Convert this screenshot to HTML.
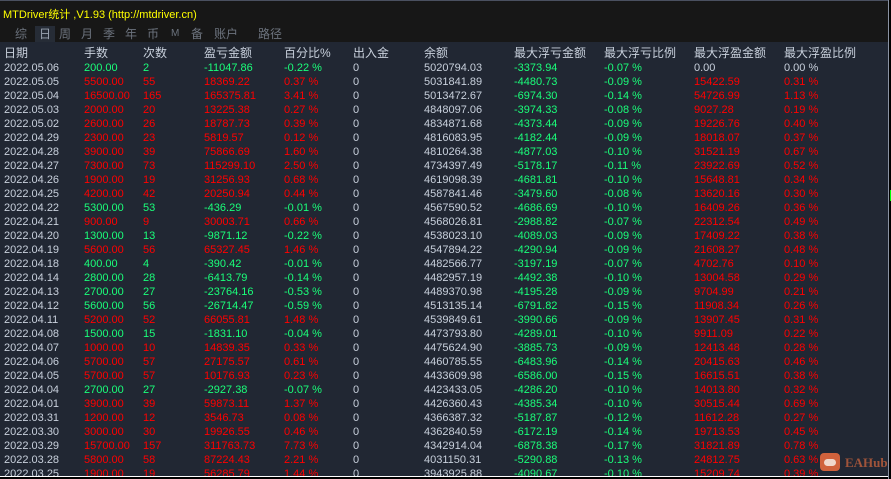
<!DOCTYPE html>
<html><head><meta charset="utf-8"><style>
*{margin:0;padding:0;box-sizing:border-box}
body{width:891px;height:479px;overflow:hidden;background:#000;font-family:"Liberation Sans","Noto Sans CJK SC",sans-serif;position:relative}
#top{position:absolute;left:0;top:0;width:888px;height:42px;background:#171717;border-top:1px solid #4a5060}
#title{position:absolute;left:3px;top:5px;color:#ffff00;font-size:11px}
#tabs{position:absolute;left:0;top:25px;height:17px;width:100%}
#tabs span{position:absolute;top:0;color:#6c737e;font-size:12px;line-height:16px}
#tabs .on{background:#262c36;color:#9aa3b0;padding:0 4px}
#tbl{position:absolute;left:0;top:42px;width:888px;height:434px;background:#212733;overflow:hidden}
#edge{position:absolute;left:888px;top:0;width:1px;height:479px;background:#8a93a3}
#gm{position:absolute;left:890px;top:190px;width:1px;height:11px;background:#00ff00}
.r{position:absolute;left:0;height:14px;width:888px;font-size:11px;line-height:14px;color:#c8d0dc}
.r span{position:absolute;top:0;white-space:nowrap}
.h{font-size:12px}
.a{left:4px}.b{left:84px}.c{left:143px}.d{left:204px}.e{left:284px}.f{left:353px}.g{left:424px}.i{left:514px;color:#1aff7a}.j{left:604px;color:#1aff7a}.k{left:694px;color:#ff0000}.l{left:784px;color:#ff0000}
.h .i,.h .j,.h .k,.h .l{color:#c8d0dc}
.G .b,.G .c,.G .d,.G .e{color:#1aff7a}
.R .b,.R .c,.R .d,.R .e{color:#ff0000}
.Z .k,.Z .l{color:#c8d0dc}
#bot{position:absolute;left:0;top:476px;width:888px;height:3px;background:#000;border-top:1px solid #fff}
#wm{position:absolute;left:820px;top:453px;width:20px;height:18px;background:#d0623c;border-radius:4px}
#wm::after{content:"";position:absolute;left:4px;top:6px;width:12px;height:7px;background:#f0d8cc;border-radius:5px}
#wt{position:absolute;left:845px;top:455px;color:#a0543a;font-family:"Liberation Serif",serif;font-size:13px;font-weight:bold}
</style></head><body>
<div id="top">
<div id="title">MTDriver统计 ,V1.93 (http://mtdriver.cn)</div>
<div id="tabs">
<span style="left:15px">综</span><span class="on" style="left:35px">日</span><span style="left:59px">周</span><span style="left:81px">月</span><span style="left:103px">季</span><span style="left:125px">年</span><span style="left:147px">币</span><span style="left:171px;font-size:10px">M</span><span style="left:191px">备</span><span style="left:214px">账户</span><span style="left:258px">路径</span>
</div></div>
<div id="tbl">
<div class="r h" style="top:4px"><span class="a">日期</span><span class="b">手数</span><span class="c">次数</span><span class="d">盈亏金额</span><span class="e">百分比%</span><span class="f">出入金</span><span class="g">余额</span><span class="i">最大浮亏金额</span><span class="j">最大浮亏比例</span><span class="k">最大浮盈金额</span><span class="l">最大浮盈比例</span></div>
<div class="r G Z" style="top:19px"><span class="a">2022.05.06</span><span class="b">200.00</span><span class="c">2</span><span class="d">-11047.86</span><span class="e">-0.22 %</span><span class="f">0</span><span class="g">5020794.03</span><span class="i">-3373.94</span><span class="j">-0.07 %</span><span class="k">0.00</span><span class="l">0.00 %</span></div>
<div class="r R" style="top:33px"><span class="a">2022.05.05</span><span class="b">5500.00</span><span class="c">55</span><span class="d">18369.22</span><span class="e">0.37 %</span><span class="f">0</span><span class="g">5031841.89</span><span class="i">-4480.73</span><span class="j">-0.09 %</span><span class="k">15422.59</span><span class="l">0.31 %</span></div>
<div class="r R" style="top:47px"><span class="a">2022.05.04</span><span class="b">16500.00</span><span class="c">165</span><span class="d">165375.81</span><span class="e">3.41 %</span><span class="f">0</span><span class="g">5013472.67</span><span class="i">-6974.30</span><span class="j">-0.14 %</span><span class="k">54726.99</span><span class="l">1.13 %</span></div>
<div class="r R" style="top:61px"><span class="a">2022.05.03</span><span class="b">2000.00</span><span class="c">20</span><span class="d">13225.38</span><span class="e">0.27 %</span><span class="f">0</span><span class="g">4848097.06</span><span class="i">-3974.33</span><span class="j">-0.08 %</span><span class="k">9027.28</span><span class="l">0.19 %</span></div>
<div class="r R" style="top:75px"><span class="a">2022.05.02</span><span class="b">2600.00</span><span class="c">26</span><span class="d">18787.73</span><span class="e">0.39 %</span><span class="f">0</span><span class="g">4834871.68</span><span class="i">-4373.44</span><span class="j">-0.09 %</span><span class="k">19226.76</span><span class="l">0.40 %</span></div>
<div class="r R" style="top:89px"><span class="a">2022.04.29</span><span class="b">2300.00</span><span class="c">23</span><span class="d">5819.57</span><span class="e">0.12 %</span><span class="f">0</span><span class="g">4816083.95</span><span class="i">-4182.44</span><span class="j">-0.09 %</span><span class="k">18018.07</span><span class="l">0.37 %</span></div>
<div class="r R" style="top:103px"><span class="a">2022.04.28</span><span class="b">3900.00</span><span class="c">39</span><span class="d">75866.69</span><span class="e">1.60 %</span><span class="f">0</span><span class="g">4810264.38</span><span class="i">-4877.03</span><span class="j">-0.10 %</span><span class="k">31521.19</span><span class="l">0.67 %</span></div>
<div class="r R" style="top:117px"><span class="a">2022.04.27</span><span class="b">7300.00</span><span class="c">73</span><span class="d">115299.10</span><span class="e">2.50 %</span><span class="f">0</span><span class="g">4734397.49</span><span class="i">-5178.17</span><span class="j">-0.11 %</span><span class="k">23922.69</span><span class="l">0.52 %</span></div>
<div class="r R" style="top:131px"><span class="a">2022.04.26</span><span class="b">1900.00</span><span class="c">19</span><span class="d">31256.93</span><span class="e">0.68 %</span><span class="f">0</span><span class="g">4619098.39</span><span class="i">-4681.81</span><span class="j">-0.10 %</span><span class="k">15648.81</span><span class="l">0.34 %</span></div>
<div class="r R" style="top:145px"><span class="a">2022.04.25</span><span class="b">4200.00</span><span class="c">42</span><span class="d">20250.94</span><span class="e">0.44 %</span><span class="f">0</span><span class="g">4587841.46</span><span class="i">-3479.60</span><span class="j">-0.08 %</span><span class="k">13620.16</span><span class="l">0.30 %</span></div>
<div class="r G" style="top:159px"><span class="a">2022.04.22</span><span class="b">5300.00</span><span class="c">53</span><span class="d">-436.29</span><span class="e">-0.01 %</span><span class="f">0</span><span class="g">4567590.52</span><span class="i">-4686.69</span><span class="j">-0.10 %</span><span class="k">16409.26</span><span class="l">0.36 %</span></div>
<div class="r R" style="top:173px"><span class="a">2022.04.21</span><span class="b">900.00</span><span class="c">9</span><span class="d">30003.71</span><span class="e">0.66 %</span><span class="f">0</span><span class="g">4568026.81</span><span class="i">-2988.82</span><span class="j">-0.07 %</span><span class="k">22312.54</span><span class="l">0.49 %</span></div>
<div class="r G" style="top:187px"><span class="a">2022.04.20</span><span class="b">1300.00</span><span class="c">13</span><span class="d">-9871.12</span><span class="e">-0.22 %</span><span class="f">0</span><span class="g">4538023.10</span><span class="i">-4089.03</span><span class="j">-0.09 %</span><span class="k">17409.22</span><span class="l">0.38 %</span></div>
<div class="r R" style="top:201px"><span class="a">2022.04.19</span><span class="b">5600.00</span><span class="c">56</span><span class="d">65327.45</span><span class="e">1.46 %</span><span class="f">0</span><span class="g">4547894.22</span><span class="i">-4290.94</span><span class="j">-0.09 %</span><span class="k">21608.27</span><span class="l">0.48 %</span></div>
<div class="r G" style="top:215px"><span class="a">2022.04.18</span><span class="b">400.00</span><span class="c">4</span><span class="d">-390.42</span><span class="e">-0.01 %</span><span class="f">0</span><span class="g">4482566.77</span><span class="i">-3197.19</span><span class="j">-0.07 %</span><span class="k">4702.76</span><span class="l">0.10 %</span></div>
<div class="r G" style="top:229px"><span class="a">2022.04.14</span><span class="b">2800.00</span><span class="c">28</span><span class="d">-6413.79</span><span class="e">-0.14 %</span><span class="f">0</span><span class="g">4482957.19</span><span class="i">-4492.38</span><span class="j">-0.10 %</span><span class="k">13004.58</span><span class="l">0.29 %</span></div>
<div class="r G" style="top:243px"><span class="a">2022.04.13</span><span class="b">2700.00</span><span class="c">27</span><span class="d">-23764.16</span><span class="e">-0.53 %</span><span class="f">0</span><span class="g">4489370.98</span><span class="i">-4195.28</span><span class="j">-0.09 %</span><span class="k">9704.99</span><span class="l">0.21 %</span></div>
<div class="r G" style="top:257px"><span class="a">2022.04.12</span><span class="b">5600.00</span><span class="c">56</span><span class="d">-26714.47</span><span class="e">-0.59 %</span><span class="f">0</span><span class="g">4513135.14</span><span class="i">-6791.82</span><span class="j">-0.15 %</span><span class="k">11908.34</span><span class="l">0.26 %</span></div>
<div class="r R" style="top:271px"><span class="a">2022.04.11</span><span class="b">5200.00</span><span class="c">52</span><span class="d">66055.81</span><span class="e">1.48 %</span><span class="f">0</span><span class="g">4539849.61</span><span class="i">-3990.66</span><span class="j">-0.09 %</span><span class="k">13907.45</span><span class="l">0.31 %</span></div>
<div class="r G" style="top:285px"><span class="a">2022.04.08</span><span class="b">1500.00</span><span class="c">15</span><span class="d">-1831.10</span><span class="e">-0.04 %</span><span class="f">0</span><span class="g">4473793.80</span><span class="i">-4289.01</span><span class="j">-0.10 %</span><span class="k">9911.09</span><span class="l">0.22 %</span></div>
<div class="r R" style="top:299px"><span class="a">2022.04.07</span><span class="b">1000.00</span><span class="c">10</span><span class="d">14839.35</span><span class="e">0.33 %</span><span class="f">0</span><span class="g">4475624.90</span><span class="i">-3885.73</span><span class="j">-0.09 %</span><span class="k">12413.48</span><span class="l">0.28 %</span></div>
<div class="r R" style="top:313px"><span class="a">2022.04.06</span><span class="b">5700.00</span><span class="c">57</span><span class="d">27175.57</span><span class="e">0.61 %</span><span class="f">0</span><span class="g">4460785.55</span><span class="i">-6483.96</span><span class="j">-0.14 %</span><span class="k">20415.63</span><span class="l">0.46 %</span></div>
<div class="r R" style="top:327px"><span class="a">2022.04.05</span><span class="b">5700.00</span><span class="c">57</span><span class="d">10176.93</span><span class="e">0.23 %</span><span class="f">0</span><span class="g">4433609.98</span><span class="i">-6586.00</span><span class="j">-0.15 %</span><span class="k">16615.51</span><span class="l">0.38 %</span></div>
<div class="r G" style="top:341px"><span class="a">2022.04.04</span><span class="b">2700.00</span><span class="c">27</span><span class="d">-2927.38</span><span class="e">-0.07 %</span><span class="f">0</span><span class="g">4423433.05</span><span class="i">-4286.20</span><span class="j">-0.10 %</span><span class="k">14013.80</span><span class="l">0.32 %</span></div>
<div class="r R" style="top:355px"><span class="a">2022.04.01</span><span class="b">3900.00</span><span class="c">39</span><span class="d">59873.11</span><span class="e">1.37 %</span><span class="f">0</span><span class="g">4426360.43</span><span class="i">-4385.34</span><span class="j">-0.10 %</span><span class="k">30515.44</span><span class="l">0.69 %</span></div>
<div class="r R" style="top:369px"><span class="a">2022.03.31</span><span class="b">1200.00</span><span class="c">12</span><span class="d">3546.73</span><span class="e">0.08 %</span><span class="f">0</span><span class="g">4366387.32</span><span class="i">-5187.87</span><span class="j">-0.12 %</span><span class="k">11612.28</span><span class="l">0.27 %</span></div>
<div class="r R" style="top:383px"><span class="a">2022.03.30</span><span class="b">3000.00</span><span class="c">30</span><span class="d">19926.55</span><span class="e">0.46 %</span><span class="f">0</span><span class="g">4362840.59</span><span class="i">-6172.19</span><span class="j">-0.14 %</span><span class="k">19713.53</span><span class="l">0.45 %</span></div>
<div class="r R" style="top:397px"><span class="a">2022.03.29</span><span class="b">15700.00</span><span class="c">157</span><span class="d">311763.73</span><span class="e">7.73 %</span><span class="f">0</span><span class="g">4342914.04</span><span class="i">-6878.38</span><span class="j">-0.17 %</span><span class="k">31821.89</span><span class="l">0.78 %</span></div>
<div class="r R" style="top:411px"><span class="a">2022.03.28</span><span class="b">5800.00</span><span class="c">58</span><span class="d">87224.43</span><span class="e">2.21 %</span><span class="f">0</span><span class="g">4031150.31</span><span class="i">-5290.88</span><span class="j">-0.13 %</span><span class="k">24812.75</span><span class="l">0.63 %</span></div>
<div class="r R" style="top:425px"><span class="a">2022.03.25</span><span class="b">1900.00</span><span class="c">19</span><span class="d">56285.79</span><span class="e">1.44 %</span><span class="f">0</span><span class="g">3943925.88</span><span class="i">-4090.67</span><span class="j">-0.10 %</span><span class="k">15209.74</span><span class="l">0.39 %</span></div>
</div>
<div id="edge"></div><div id="gm"></div>
<div id="bot"></div>
<div id="wm"></div><div id="wt">EAHub</div>
</body></html>
